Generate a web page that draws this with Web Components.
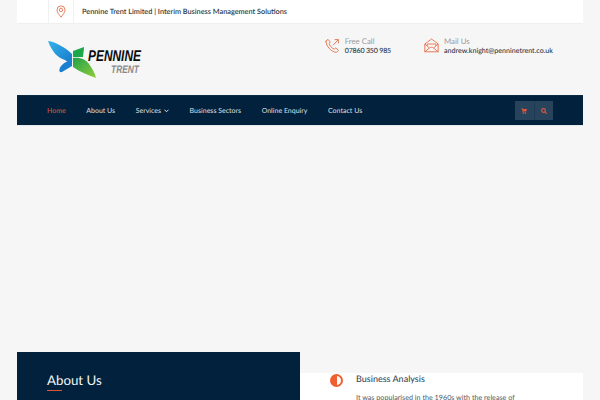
<!DOCTYPE html>
<html lang="en">
<head>
<meta charset="utf-8">
<title>Pennine Trent</title>
<style>
html,body{margin:0;height:400px;overflow:hidden;background:#f6f6f6}
body{font-family:Lato,"Open Sans",sans-serif;text-rendering:geometricPrecision}
</style>
</head>
<body>
<pt-page>
  <pt-topbar>Pennine Trent Limited | Interim Business Management Solutions</pt-topbar>
  <pt-header></pt-header>
  <pt-nav></pt-nav>
  <pt-hero></pt-hero>
  <pt-lower></pt-lower>
</pt-page>
<script>
function def(name,html){
  customElements.define(name,class extends HTMLElement{
    constructor(){super();this.attachShadow({mode:"open"}).innerHTML=html;}
  });
}
def("pt-page",`<style>:host{display:block;padding:0 17px;width:566px}</style><slot></slot>`);
def("pt-topbar",`<style>
:host{display:flex;height:23px;background:#fff;padding-left:31px;align-items:stretch;box-shadow:0 1px 0 #efefef}
.pin{width:24px;display:flex;align-items:center;justify-content:center;border-left:1px solid #f1f1f1;border-right:1px solid #f1f1f1}
.t{display:flex;align-items:center;padding-left:8px;font:600 7.3px Lato,sans-serif;color:#2e3a44;white-space:nowrap}
</style>
<div class="pin"><svg width="10" height="13" viewBox="0 0 10 13" fill="none" stroke="#e9805f" stroke-width="1"><path d="M5 12.2C3.2 9.6 1 7.6 1 4.9a4 4 0 0 1 8 0C9 7.6 6.8 9.6 5 12.2Z"/><circle cx="5" cy="4.9" r="1.7"/></svg></div>
<div class="t"><slot></slot></div>`);
def("pt-contact",`<style>
:host{display:flex;align-items:center;gap:5px}
.l{display:flex;flex-direction:column}
.a{font:400 7.8px/10px Lato,sans-serif;color:#9a9a9a}
.b{font:500 7.1px/9px Lato,sans-serif;color:#1f3346;white-space:nowrap}
::slotted(svg){display:block}
</style><slot name="i"></slot><div class="l"><div class="a"><slot name="a"></slot></div><div class="b"><slot name="b"></slot></div></div>`);
def("pt-header",`<style>
:host{display:flex;height:72px;justify-content:space-between;box-sizing:border-box;padding:13px 30px 0 31px}
.logo{display:block;margin-top:4px;overflow:visible}
.r{display:flex;gap:33px;align-items:flex-start}
</style>
<svg class="logo" width="130" height="40" viewBox="0 0 130 40">
<defs>
<linearGradient id="g1" x1="0" y1="0" x2="1" y2="1"><stop offset="0" stop-color="#34b4ea"/><stop offset="1" stop-color="#1676c8"/></linearGradient>
<linearGradient id="g2" x1="0" y1="0" x2="1" y2="1"><stop offset="0" stop-color="#1fa24a"/><stop offset="1" stop-color="#93cd3a"/></linearGradient>
</defs>
<path d="M0 1C8 2 18 8 24 14V25L17 20C10 18 4 12 0 1Z" fill="url(#g1)"/>
<path d="M24 20V26L14 32C10 33 11 28 14 25C17 22 20 21 24 20Z" fill="#1b7fd0"/>
<path d="M25 17V11L36 7C36 11 35 14 35 17Z" fill="#1ea64b"/>
<path d="M25 18C33 17 38 20 41 24C44 28 47 33 48 38C40 35 32 32 25 27Z" fill="url(#g2)"/>
<text x="40" y="20.5" font-family="'Liberation Sans',sans-serif" font-weight="700" font-style="italic" font-size="15.5" fill="#0c0c0c" textLength="53" lengthAdjust="spacingAndGlyphs">PENNINE</text>
<text x="63" y="32.5" font-family="'Liberation Sans',sans-serif" font-weight="700" font-style="italic" font-size="11" fill="#8a8a8a" textLength="28" lengthAdjust="spacingAndGlyphs">TRENT</text>
</svg>
<div class="r">
<pt-contact>
<svg slot="i" width="15" height="15" viewBox="0 0 15 15" fill="none" stroke="#e2704c" stroke-width=".9" stroke-linecap="round" stroke-linejoin="round"><path d="M1 3.2 3 1.3 5.2 4 4.2 5.5C4.6 7.6 7 10.4 9.2 11.1L10.8 10 13.4 12.3 11.6 14.3C7.2 14.6 .8 8.5 1 3.2Z"/><path d="M8.2 7 13 2M10 1.6h3.4V5"/></svg>
<span slot="a">Free Call</span><span slot="b" style="letter-spacing:-.2px">07860 350 985</span>
</pt-contact>
<pt-contact>
<svg slot="i" width="15" height="15" viewBox="0 0 15 15" fill="none" stroke="#e2704c" stroke-width=".9" stroke-linejoin="round"><path d="M.8 6 7.5 1l6.7 5v7.8H.8Z"/><path d="M.8 6 5.4 10 .8 13.8M14.2 6 9.6 10l4.6 3.8M5.4 10c1.3-1 2.9-1 4.2 0M3.2 7.8V6h8.6v1.8"/></svg>
<span slot="a">Mail Us</span><span slot="b">andrew.knight@penninetrent.co.uk</span>
</pt-contact>
</div>`);
def("pt-nav",`<style>
:host{display:flex;height:30px;box-sizing:border-box;background:#02213d;align-items:center;padding:0 0 0 30px;border-top:1px solid #0a2a46;box-shadow:0 1px 0 #e6e8ea}
a{font:500 7px Lato,sans-serif;color:#d0d8de;text-decoration:none;white-space:nowrap;margin-right:20.5px;display:flex;align-items:center;gap:3px}
a.on{color:#d8553a}
.tools{margin-left:auto;margin-right:30px;width:38px;height:19px;background:#27445c;display:flex;align-items:center}
.tools span{width:19px;display:flex;justify-content:center}
.tools span+span{border-left:1px solid #1c3a53;height:19px;align-items:center}
</style>
<a class="on">Home</a><a>About Us</a><a>Services <svg width="5" height="4" viewBox="0 0 5 4" fill="none" stroke="#d7dee4" stroke-width="1"><path d="M.5 .7 2.5 2.8 4.5 .7"/></svg></a><a>Business Sectors</a><a>Online Enquiry</a><a>Contact Us</a>
<div class="tools"><span><svg width="6" height="6" viewBox="0 0 6 6" fill="#e2573a"><path d="M0 0h1.3l.3 1H6L5.2 3.6H2.1L2.3 4.2H5.2V4.8H1.8L.9 .6H0Z"/><circle cx="2.2" cy="5.4" r=".6"/><circle cx="4.6" cy="5.4" r=".6"/></svg></span><span><svg width="6" height="6" viewBox="0 0 6 6" fill="none" stroke="#e2573a" stroke-width="1.1"><circle cx="2.5" cy="2.5" r="1.9"/><path d="M3.9 3.9 5.7 5.7"/></svg></span></div>`);
def("pt-hero",`<style>:host{display:block;height:227px}</style>`);
def("pt-lower",`<style>
:host{display:grid;grid-template-columns:283px 283px;height:60px;overflow:hidden}
.l{background:#02213d;padding:20px 0 0 30px}
h2{margin:0;font:400 13.3px/16px Lato,sans-serif;color:#f3f5f6}
.u{width:15px;height:1px;background:#d8553a;margin-top:2px}
.w{margin-top:21px;background:#fff;display:flex;padding:0 0 0 30px;gap:13px;height:60px}
.ic{margin-top:1px;width:13px;height:13px;flex:none;box-sizing:border-box;border:2.5px solid #ef5f2f;border-radius:50%;background:linear-gradient(90deg,#ef5f2f 50%,#fff 50%)}
h3{margin:0;font:500 9px/11px Lato,sans-serif;color:#3b4a57}
p{margin:8px 0 0;font:400 7.2px/11px Lato,sans-serif;color:#4f5a64;white-space:nowrap}
</style>
<div class="l"><h2>About Us</h2><div class="u"></div></div>
<div class="w"><div class="ic"></div><div><h3>Business Analysis</h3><p>It was popularised in the 1960s with the release of</p></div></div>`);
</script>
</body>
</html>
